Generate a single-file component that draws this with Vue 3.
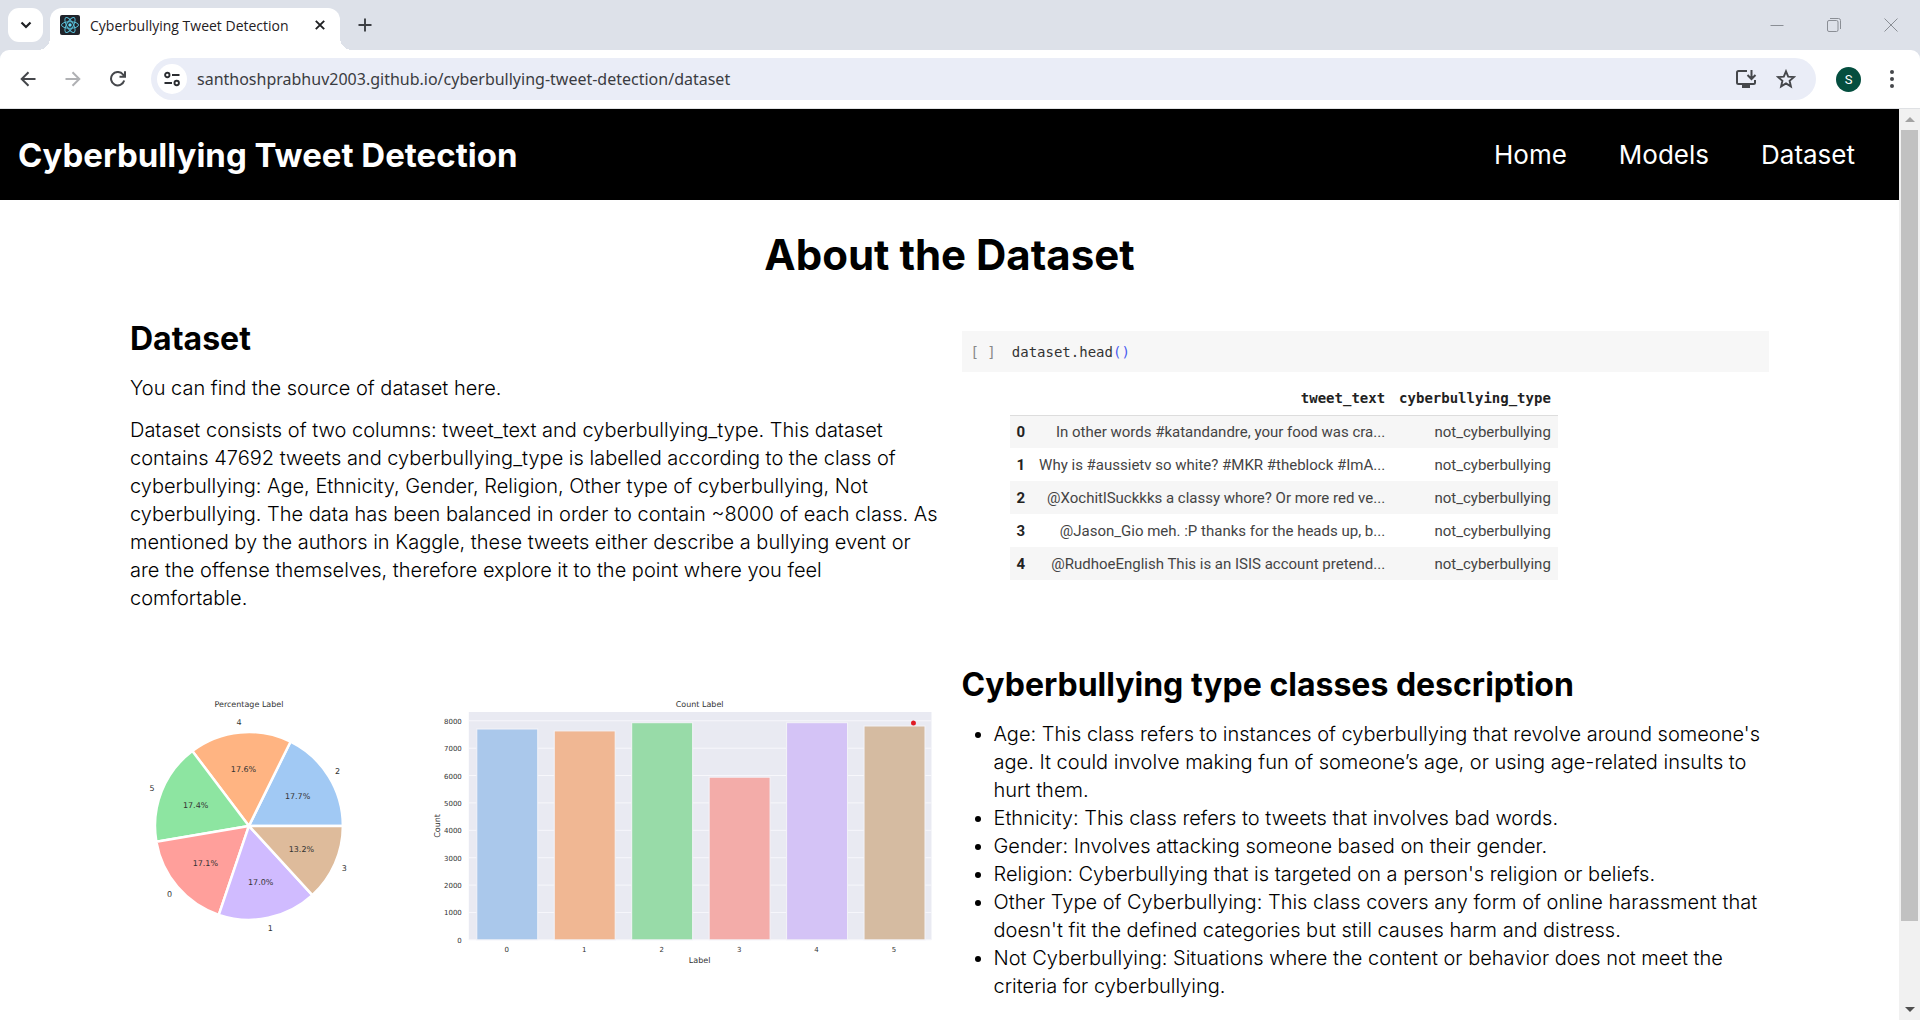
<script setup>
import { ref } from 'vue'

const url = ref('santhoshprabhuv2003.github.io/cyberbullying-tweet-detection/dataset')

const navLinks = ['Home', 'Models', 'Dataset']

const tweets = [
  'In other words #katandandre, your food was cra...',
  'Why is #aussietv so white? #MKR #theblock #ImA...',
  '@XochitlSuckkks a classy whore? Or more red ve...',
  '@Jason_Gio meh. :P thanks for the heads up, b...',
  '@RudhoeEnglish This is an ISIS account pretend...',
]

const classes = [
  "Age: This class refers to instances of cyberbullying that revolve around someone's age. It could involve making fun of someone’s age, or using age-related insults to hurt them.",
  'Ethnicity: This class refers to tweets that involves bad words.',
  'Gender: Involves attacking someone based on their gender.',
  "Religion: Cyberbullying that is targeted on a person's religion or beliefs.",
  "Other Type of Cyberbullying: This class covers any form of online harassment that doesn't fit the defined categories but still causes harm and distress.",
  'Not Cyberbullying: Situations where the content or behavior does not meet the criteria for cyberbullying.',
]

// Pie: centre, radius and slices, counter-clockwise from three o'clock
const cx = 119
const cy = 136
const radius = 94
const shares = [
  { name: '2', value: 17.7, color: '#a1c9f4' },
  { name: '4', value: 17.6, color: '#ffb482' },
  { name: '5', value: 17.4, color: '#8de5a1' },
  { name: '0', value: 17.1, color: '#ff9f9b' },
  { name: '1', value: 17.0, color: '#d0bbff' },
  { name: '3', value: 13.2, color: '#debb9b' },
]
const point = (share, r) => {
  const a = (share / 100) * Math.PI * 2
  return [cx + r * Math.cos(a), cy - r * Math.sin(a)]
}
let start = 0
const slices = shares.map((s) => {
  const [x1, y1] = point(start, radius)
  const [x2, y2] = point(start + s.value, radius)
  const middle = start + s.value / 2
  start += s.value
  const [tx, ty] = point(middle, radius * 0.61)
  const [lx, ly] = point(middle, radius * 1.11)
  return {
    ...s,
    d: `M${cx} ${cy}L${x1} ${y1}A${radius} ${radius} 0 0 0 ${x2} ${y2}Z`,
    tx, ty, lx, ly,
  }
})

// Bars: counts per class on a 0-8000 scale
const base = 250
const perThousand = 27.4
const bars = [
  { value: 7700, color: '#aac8eb' },
  { value: 7630, color: '#f0b793' },
  { value: 7930, color: '#98dba8' },
  { value: 5940, color: '#f3aca9' },
  { value: 7930, color: '#d4c3f6' },
  { value: 7810, color: '#d5bba1' },
].map((b, i) => {
  const h = (b.value / 1000) * perThousand
  return { ...b, x: 347 + i * 77.5, y: base - h, h }
})
const ticks = [0, 1, 2, 3, 4, 5, 6, 7, 8].map((t) => ({ label: t * 1000, y: base - t * perThousand }))
</script>

<template>
  <div class="browser">
    <div class="tabstrip">
      <button class="tab-search" aria-label="Search tabs">
        <svg width="12" height="8" viewBox="0 0 12 8"><path d="M1.5 1.5 6 6l4.500-4.500" fill="none" stroke="#1f2023" stroke-width="2.200" /></svg>
      </button>
      <div class="tab">
        <svg class="favicon" width="20" height="20" viewBox="0 0 20 20">
          <rect width="20" height="20" rx="2" fill="#20232a" />
          <g fill="none" stroke="#58bdd6" stroke-width="1">
            <ellipse cx="10" cy="10" rx="8.500" ry="3.300" />
            <ellipse cx="10" cy="10" rx="8.500" ry="3.300" transform="rotate(60 10 10)" />
            <ellipse cx="10" cy="10" rx="8.500" ry="3.300" transform="rotate(120 10 10)" />
          </g>
          <circle cx="10" cy="10" r="1.700" fill="#61dafb" />
        </svg>
        <span class="tab-title">Cyberbullying Tweet Detection</span>
        <button class="icon-btn" aria-label="Close tab">
          <svg width="10" height="10" viewBox="0 0 10 10"><path d="m.8.8 8.400 8.400M9.200.8.8 9.200" stroke="#1f2023" stroke-width="1.900" /></svg>
        </button>
      </div>
      <button class="icon-btn new-tab" aria-label="New tab">
        <svg width="14" height="14" viewBox="0 0 14 14"><path d="M7 .5v13M.5 7h13" stroke="#3c3f44" stroke-width="1.900" /></svg>
      </button>
      <div class="window-controls">
        <button class="icon-btn" aria-label="Minimize"><svg width="14" height="14" viewBox="0 0 14 14"><path d="M.5 7.500h13" stroke="#8a8e95" /></svg></button>
        <button class="icon-btn" aria-label="Restore">
          <svg width="14" height="14" viewBox="0 0 14 14" fill="none" stroke="#8a8e95"><rect x=".5" y="2.500" width="10.500" height="11" rx="1.500" /><path d="M3 .5h8.500a2 2 0 0 1 2 2V11" /></svg>
        </button>
        <button class="icon-btn" aria-label="Close"><svg width="14" height="14" viewBox="0 0 14 14"><path d="m.5.5 13 13M13.500.5l-13 13" stroke="#8a8e95" /></svg></button>
      </div>
    </div>

    <div class="toolbar">
      <button class="icon-btn" aria-label="Back"><svg width="16" height="16" viewBox="0 0 16 16" fill="none" stroke="#45474b" stroke-width="2"><path d="M15.500 8H2M8.500 1.200 1.700 8l6.800 6.800" /></svg></button>
      <button class="icon-btn" aria-label="Forward"><svg width="16" height="16" viewBox="0 0 16 16" fill="none" stroke="#b0b1b4" stroke-width="2"><path d="M.5 8H14M7.500 1.200 14.300 8l-6.800 6.800" /></svg></button>
      <button class="icon-btn" aria-label="Reload"><svg width="16" height="16" viewBox="0 0 16 16" fill="none" stroke="#45474b" stroke-width="2"><path d="M14.200 9.500A6.700 6.700 0 1 1 13 3.500l1.500 1.700M15 .3v5.400H9.500" /></svg></button>
      <div class="address">
        <button class="site-info" aria-label="View site information">
          <svg width="16" height="16" viewBox="0 0 16 16" fill="none" stroke="#2b2d31" stroke-width="1.900"><circle cx="3.300" cy="4" r="2.200" /><path d="M8 4h7.500M.5 12H8" /><circle cx="12.700" cy="12" r="2.200" /></svg>
        </button>
        <input v-model="url" type="text" class="url" aria-label="Address" />
        <button class="icon-btn" aria-label="Install app">
          <svg width="22" height="20" viewBox="0 0 22 20" fill="none" stroke="#45474b" stroke-width="2"><path d="M12 2H3.500A1.500 1.500 0 0 0 2 3.500v10A1.500 1.500 0 0 0 3.500 15h15a1.500 1.500 0 0 0 1.500-1.500V11M16.500 1v8M12.500 6l4 4 4-4" /><path d="M7 16h8v3H7z" fill="#45474b" stroke="none" /></svg>
        </button>
        <button class="icon-btn" aria-label="Bookmark this page">
          <svg width="20" height="20" viewBox="0 0 20 20" fill="none" stroke="#45474b" stroke-width="1.900"><path d="m10 2.300 2.200 5.300 5.700.5-4.300 3.700 1.300 5.600-4.900-3-4.900 3 1.300-5.600L2.100 8.100l5.700-.5z" /></svg>
        </button>
      </div>
      <button class="avatar" aria-label="Profile">S</button>
      <button class="icon-btn menu" aria-label="Menu"><svg width="4" height="18" viewBox="0 0 4 18" fill="#45474b"><circle cx="2" cy="2" r="2" /><circle cx="2" cy="9" r="2" /><circle cx="2" cy="16" r="2" /></svg></button>
    </div>

    <div class="viewport">
      <div class="page">
        <header class="site-header">
          <div class="brand">Cyberbullying Tweet Detection</div>
          <nav class="nav">
            <a v-for="link in navLinks" :key="link" href="#">{{ link }}</a>
          </nav>
        </header>

        <main class="content">
          <h1>About the Dataset</h1>
          <div class="grid">
            <section class="intro">
              <h2>Dataset</h2>
              <p>You can find the source of dataset here.</p>
              <p>
                Dataset consists of two columns: tweet_text and cyberbullying_type. This dataset
                contains 47692 tweets and cyberbullying_type is labelled according to the class of
                cyberbullying: Age, Ethnicity, Gender, Religion, Other type of cyberbullying, Not
                cyberbullying. The data has been balanced in order to contain ~8000 of each class. As
                mentioned by the authors in Kaggle, these tweets either describe a bullying event or
                are the offense themselves, therefore explore it to the point where you feel
                comfortable.
              </p>
            </section>

            <section class="notebook">
              <div class="code"><span class="prompt">[ ]</span><code>dataset.head<span class="paren">()</span></code></div>
              <table>
                <thead>
                  <tr><th></th><th scope="col">tweet_text</th><th scope="col">cyberbullying_type</th></tr>
                </thead>
                <tbody>
                  <tr v-for="(tweet, i) in tweets" :key="i">
                    <th scope="row">{{ i }}</th><td>{{ tweet }}</td><td>not_cyberbullying</td>
                  </tr>
                </tbody>
              </table>
            </section>

            <section class="charts">
              <svg viewBox="0 0 808 290" role="img" aria-label="Percentage and count per label">
                <g class="chart-text">
                  <text class="large" x="119" y="17">Percentage Label</text>
                  <path v-for="s in slices" :key="s.name" :d="s.d" :fill="s.color" stroke="#fff" stroke-width="2.500" />
                  <g v-for="s in slices" :key="s.name" class="large">
                    <text :x="s.tx" :y="s.ty + 3">{{ s.value.toFixed(1) }}%</text>
                    <text :x="s.lx" :y="s.ly + 3">{{ s.name }}</text>
                  </g>

                  <text class="large" x="570" y="17">Count Label</text>
                  <rect x="339" y="22" width="463" height="228" fill="#e9eaf2" />
                  <g v-for="t in ticks" :key="t.label">
                    <path :d="`M339 ${t.y}H802`" stroke="#f7f7fb" />
                    <text class="tick" x="332" :y="t.y + 3">{{ t.label }}</text>
                  </g>
                  <g v-for="(b, i) in bars" :key="i">
                    <rect :x="b.x" :y="b.y" width="61" :height="b.h" :fill="b.color" stroke="#f3f3f8" stroke-width="1" />
                    <text :x="b.x + 30" y="262">{{ i }}</text>
                  </g>
                  <text class="large" x="570" y="273">Label</text>
                  <text class="large" x="310" y="136" transform="rotate(-90 310 136)">Count</text>
                  <circle cx="784" cy="33" r="2.500" fill="#e01b24" />
                </g>
              </svg>
            </section>

            <section>
              <h2>Cyberbullying type classes description</h2>
              <ul>
                <li v-for="item in classes" :key="item">{{ item }}</li>
              </ul>
            </section>
          </div>
        </main>
      </div>

      <div class="scrollbar">
        <span class="arrow up"></span>
        <div class="track"><div class="thumb"></div></div>
        <span class="arrow down"></span>
      </div>
    </div>
  </div>
</template>

<style>
body {
  overflow: hidden;
}
</style>

<style scoped>
* {
  box-sizing: border-box;
}

.browser {
  display: flex;
  flex-direction: column;
  height: 100vh;
  background: #dde1e9;
  color: #000;
  font-family: Inter, sans-serif;
}

button {
  padding: 0;
  border: 0;
  background: none;
}

.icon-btn {
  display: flex;
  align-items: center;
  justify-content: center;
  flex: none;
}

.tabstrip {
  display: flex;
  align-items: center;
  height: 50px;
  flex: none;
  padding-left: 8px;
}

.tab-search {
  display: flex;
  align-items: center;
  justify-content: center;
  width: 35px;
  height: 34px;
  border-radius: 11px;
  background: #fff;
}

.tab {
  position: relative;
  display: flex;
  align-items: center;
  gap: 10px;
  align-self: flex-end;
  width: 290px;
  height: 42px;
  margin-left: 7px;
  padding: 0 15px 8px 10px;
  border-radius: 12px 12px 0 0;
  background: #fff;
}

.tab::before,
.tab::after {
  content: '';
  position: absolute;
  bottom: 0;
  width: 12px;
  height: 12px;
}

.tab::before {
  right: 100%;
  background: radial-gradient(circle at 0 0, transparent 12px, #fff 12px);
}

.tab::after {
  left: 100%;
  background: radial-gradient(circle at 100% 0, transparent 12px, #fff 12px);
}

.tab-title {
  flex: 1;
  font: 14px 'Open Sans', sans-serif;
  color: #1f2023;
  white-space: nowrap;
}

.new-tab {
  margin-left: 18px;
}

.window-controls {
  display: flex;
  gap: 43px;
  margin-left: auto;
  padding-right: 22px;
}

.toolbar {
  display: flex;
  align-items: center;
  flex: none;
  gap: 29px;
  height: 59px;
  padding: 0 26px 0 20px;
  border-bottom: 1px solid #dfe1e4;
  border-radius: 9px 9px 0 0;
  background: #fff;
}

.address {
  display: flex;
  align-items: center;
  flex: 1;
  gap: 19px;
  height: 42px;
  margin-left: -4px;
  padding: 0 20px 0 6px;
  border-radius: 21px;
  background: #eaedf7;
}

.site-info {
  display: flex;
  align-items: center;
  justify-content: center;
  flex: none;
  width: 30px;
  height: 30px;
  border-radius: 50%;
  background: #fff;
}

.url {
  flex: 1;
  min-width: 0;
  margin-left: -9px;
  padding: 0;
  border: 0;
  outline: 0;
  background: none;
  font: 16px 'Noto Sans', sans-serif;
  color: #3a3c41;
}

.avatar {
  width: 25px;
  height: 25px;
  margin-left: -9px;
  border-radius: 50%;
  background: #044e3f;
  color: #fff;
  font: 13px Roboto, sans-serif;
}

.viewport {
  display: flex;
  flex: 1;
  min-height: 0;
  background: #fff;
}

.page {
  flex: 1;
  min-width: 0;
  overflow: hidden;
}

.site-header {
  display: flex;
  align-items: center;
  justify-content: space-between;
  height: 91px;
  padding: 0 44px 0 18px;
  background: #000;
  color: #fff;
}

.brand {
  font-size: 33px;
  font-weight: 700;
}

.nav {
  display: flex;
  gap: 52px;
}

.nav a {
  color: #fff;
  font-size: 26px;
  text-decoration: none;
}

.content {
  padding: 25px 130px 0;
}

h1 {
  margin: 0;
  font-size: 42px;
  line-height: 60px;
  text-align: center;
}

.grid {
  display: grid;
  grid-template-columns: 1fr 1fr;
  gap: 48px 24px;
  margin-top: 29px;
}

h2 {
  margin: 0 0 10px;
  font-size: 32px;
  line-height: 50px;
}

p,
ul {
  margin: 0 0 14px;
  font-size: 20px;
  font-weight: 300;
  line-height: 28px;
}

p:last-child,
ul {
  margin-bottom: 0;
}

ul {
  padding-left: 32px;
}

.intro {
  margin-right: -3px;
}

.notebook {
  padding-top: 17px;
}

.code {
  display: flex;
  align-items: center;
  gap: 16px;
  height: 41px;
  padding-left: 9px;
  background: #f7f7f7;
  color: #333;
  font: 14px 'DejaVu Sans Mono', monospace;
}

.code code {
  font: inherit;
}

.prompt {
  color: #888;
}

.paren {
  color: #4a5cf0;
}

table {
  margin: 10px 0 0 48px;
  border-collapse: collapse;
  color: #444;
  font: 15px Roboto, sans-serif;
}

th,
td {
  height: 33px;
  padding: 0 7px;
  text-align: right;
}

thead th {
  border-bottom: 1px solid #ddd;
  color: #222;
  font: bold 14px 'DejaVu Sans Mono', monospace;
}

tbody th {
  color: #222;
}

tbody tr:nth-child(odd) {
  background: #f6f6f6;
}

.charts {
  padding-top: 30px;
}

.charts svg {
  display: block;
  width: 100%;
}

.chart-text {
  fill: #333;
  font: 7px 'DejaVu Sans', sans-serif;
  text-anchor: middle;
}

.large {
  font-size: 8px;
}

.tick {
  text-anchor: end;
}

.scrollbar {
  display: flex;
  flex-direction: column;
  align-items: center;
  flex: none;
  width: 21px;
  background: #f1f1f1;
}

.track {
  flex: 1;
  width: 17px;
}

.thumb {
  height: 91%;
  background: #c1c1c1;
}

.arrow {
  display: flex;
  align-items: center;
  justify-content: center;
  width: 21px;
  height: 21px;
}

.arrow::before {
  content: '';
  border: 5px solid transparent;
}

.up::before {
  border-top: 0;
  border-bottom-color: #a3a3a3;
}

.down::before {
  border-bottom: 0;
  border-top-color: #505050;
}
</style>
